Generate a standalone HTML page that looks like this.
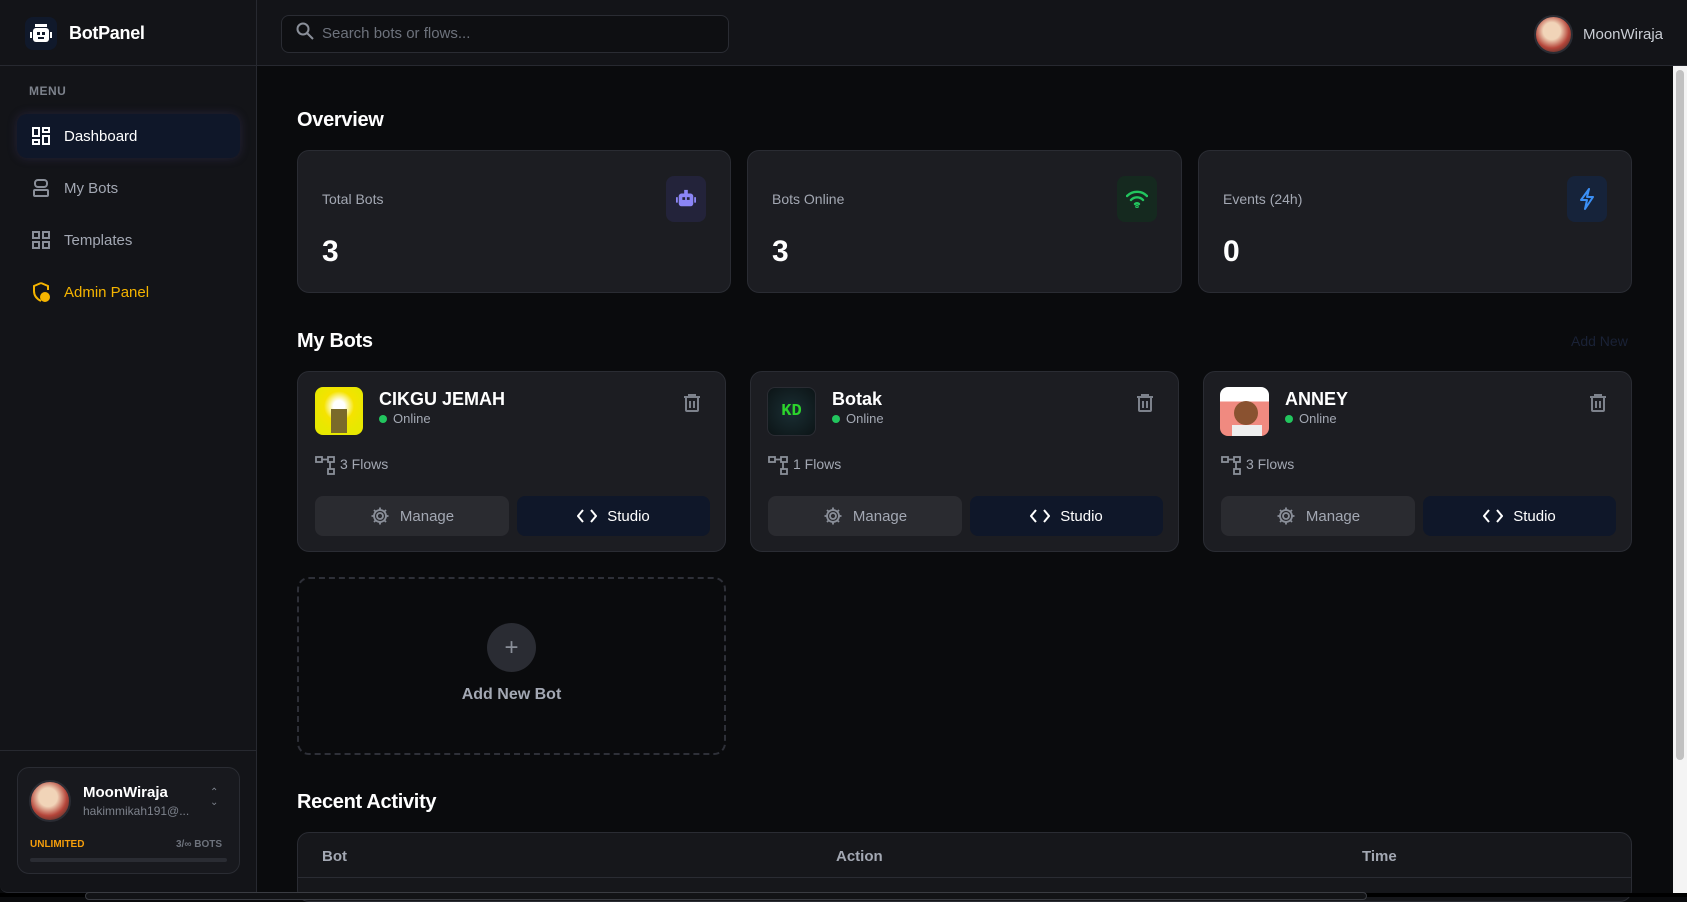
<!DOCTYPE html>
<html><head><meta charset="utf-8"><style>
*{box-sizing:border-box;margin:0;padding:0}
body{width:1687px;height:897px;overflow:hidden;background:#0a0b0d;font-family:"Liberation Sans",sans-serif;color:#fff;position:relative}
.a{position:absolute}
.side{left:0;top:0;width:257px;height:893px;background:#131418;border-right:1px solid #272930;border-bottom:1px solid #272930;border-radius:0 0 0 8px}
.top{left:257px;top:0;width:1430px;height:66px;background:#131418;border-bottom:1px solid #272930}
.card{background:#1c1d22;border:1px solid #2a2c33;border-radius:12px}
.lbl{font-size:14px;color:#a3a8b3}
.num{font-size:30px;font-weight:bold}
.ib{width:40px;height:46px;border-radius:8px;display:flex;align-items:center;justify-content:center}
.h2{font-size:20px;font-weight:bold;letter-spacing:-0.3px}
.nav{left:17px;width:223px;height:44px;display:flex;align-items:center;padding-left:15px;font-size:15px;color:#a3a8b3;border-radius:10px}
.nav svg{margin-right:14px}
.btn{height:40px;border-radius:8px;display:flex;align-items:center;justify-content:center;font-size:15px}
.btn svg{margin-right:10px}
</style></head><body>
<div class="a" style="left:0;top:0;width:1687px;height:2px;background:#3a3c42"></div>
<div class="a side"></div>
<div class="a" style="left:0;top:65px;width:257px;height:1px;background:#272930"></div>
<div class="a" style="left:25px;top:17px;width:32px;height:33px;background:#10192b;border-radius:8px;display:flex;align-items:center;justify-content:center">
<svg width="22" height="20" viewBox="0 0 22 20"><rect x="5" y="0" width="12" height="3" fill="#fff"/><rect x="3" y="4" width="16" height="14" rx="3" fill="#fff"/><rect x="0" y="8" width="2" height="6" fill="#fff"/><rect x="20" y="8" width="2" height="6" fill="#fff"/><rect x="7" y="8" width="3" height="3" fill="#10192b"/><rect x="12" y="8" width="3" height="3" fill="#10192b"/><rect x="8" y="13" width="6" height="2" fill="#10192b"/></svg></div>
<div class="a" style="left:69px;top:23px;font-size:18px;font-weight:bold;letter-spacing:-0.3px">BotPanel</div>
<div class="a" style="left:29px;top:84px;font-size:12px;font-weight:bold;color:#7d828c;letter-spacing:.5px">MENU</div>
<div class="a nav" style="top:114px;background:#0f1729;color:#fff;box-shadow:0 0 10px rgba(90,80,160,.25)"><svg width="18" height="18" viewBox="0 0 18 18" fill="none" stroke="#fff" stroke-width="2"><rect x="1" y="1" width="6" height="8"/><rect x="11" y="1" width="6" height="4"/><rect x="1" y="13" width="6" height="4"/><rect x="11" y="9" width="6" height="8"/></svg>Dashboard</div>
<div class="a nav" style="top:166px"><svg width="18" height="18" viewBox="0 0 18 18" fill="none" stroke="#8a8f99" stroke-width="2"><rect x="3" y="1" width="12" height="7" rx="3"/><rect x="2" y="11" width="14" height="6" rx="1"/></svg>My Bots</div>
<div class="a nav" style="top:218px"><svg width="18" height="18" viewBox="0 0 18 18" fill="none" stroke="#8a8f99" stroke-width="2"><rect x="1" y="1" width="6" height="6"/><rect x="11" y="1" width="6" height="6"/><rect x="1" y="11" width="6" height="6"/><rect x="11" y="11" width="6" height="6"/></svg>Templates</div>
<div class="a nav" style="top:270px;color:#f5b400"><svg width="18" height="20" viewBox="0 0 18 20" fill="none" stroke="#f5b400" stroke-width="2"><path d="M9 1L2 4v5c0 5 3 8 7 10"/><path d="M9 1l7 3v4"/><circle cx="13" cy="15" r="4" fill="#f5b400"/></svg>Admin Panel</div>
<div class="a" style="left:0;top:750px;width:257px;height:1px;background:#272930"></div>
<div class="a card" style="left:17px;top:767px;width:223px;height:107px;background:#18191e">
<div class="a" style="left:11px;top:12px;width:42px;height:42px;border-radius:50%;background:radial-gradient(circle at 45% 40%,#f1d4b8 30%,#b5453a 60%,#3a2a25 90%);border:2px solid #2a2c33"></div>
<div class="a" style="left:65px;top:16px;font-size:15px;font-weight:bold">MoonWiraja</div>
<div class="a" style="left:65px;top:36px;font-size:12px;color:#7d828c">hakimmikah191@...</div>
<div class="a" style="left:192px;top:20px;font-size:10px;color:#7d828c;line-height:10px">⌃<br>⌄</div>
<div class="a" style="left:12px;top:71px;font-size:10px;font-weight:bold;color:#f59e0b">UNLIMITED</div>
<div class="a" style="left:158px;top:71px;font-size:10px;font-weight:bold;color:#6d727c">3/∞ BOTS</div>
<div class="a" style="left:12px;top:90px;width:197px;height:4px;border-radius:2px;background:#2a2c33"></div>
</div>
<div class="a top"></div>
<div class="a" style="left:281px;top:15px;width:448px;height:38px;border:1px solid #2a2c33;border-radius:8px;background:#0e0f12"></div>
<svg class="a" style="left:296px;top:22px" width="18" height="18" viewBox="0 0 18 18" fill="none" stroke="#8a8f99" stroke-width="2"><circle cx="7" cy="7" r="5.5"/><path d="M11 11l6 6"/></svg>
<div class="a" style="left:322px;top:25px;font-size:15px;color:#6d727c">Search bots or flows...</div>
<div class="a" style="left:1534px;top:15px;width:39px;height:39px;border-radius:50%;background:radial-gradient(circle at 45% 40%,#f1d4b8 30%,#b5453a 60%,#3a2a25 90%);border:2px solid #2a2c33"></div>
<div class="a" style="left:1583px;top:26px;font-size:15px;color:#c9cdd4">MoonWiraja</div>
<div class="a" style="left:1673px;top:66px;width:14px;height:831px;background:#f4f4f4"></div>
<div class="a" style="left:1676px;top:70px;width:8px;height:690px;border-radius:4px;background:#c1c1c1"></div>
<div class="a h2" style="left:297px;top:109px">Overview</div>
<div class="a card" style="left:297px;top:150px;width:434px;height:143px"><div class="a lbl" style="left:24px;top:40px">Total Bots</div><div class="a num" style="left:24px;top:84px">3</div><div class="a ib" style="left:368px;top:25px;background:#23233a"><svg width="20" height="20" viewBox="0 0 22 20"><rect x="3" y="4" width="16" height="14" rx="3" fill="#8b85f5"/><rect x="9" y="0" width="4" height="4" fill="#8b85f5"/><rect x="0" y="8" width="2" height="6" fill="#8b85f5"/><rect x="20" y="8" width="2" height="6" fill="#8b85f5"/><rect x="7" y="8" width="3" height="3" fill="#23233a"/><rect x="12" y="8" width="3" height="3" fill="#23233a"/></svg></div></div>
<div class="a card" style="left:747px;top:150px;width:435px;height:143px"><div class="a lbl" style="left:24px;top:40px">Bots Online</div><div class="a num" style="left:24px;top:84px">3</div><div class="a ib" style="left:369px;top:25px;background:#15291f"><svg width="22" height="18" viewBox="0 0 22 18" fill="none" stroke="#22c55e" stroke-width="2.4" stroke-linecap="round"><path d="M1 6a14 14 0 0 1 20 0"/><path d="M5 10a8 8 0 0 1 12 0"/><path d="M9 14a3 3 0 0 1 4 0"/><circle cx="11" cy="16.5" r=".6"/></svg></div></div>
<div class="a card" style="left:1198px;top:150px;width:434px;height:143px"><div class="a lbl" style="left:24px;top:40px">Events (24h)</div><div class="a num" style="left:24px;top:84px">0</div><div class="a ib" style="left:368px;top:25px;background:#16233a"><svg width="16" height="22" viewBox="0 0 16 22" fill="none" stroke="#3b8ff5" stroke-width="2" stroke-linejoin="round"><path d="M10 1L2 12h6l-2 9 8-12H8z"/></svg></div></div>
<div class="a h2" style="left:297px;top:330px">My Bots</div>
<div class="a" style="left:1571px;top:333px;font-size:14px;color:#1a2236">Add New</div>

<div class="a card" style="left:297px;top:371px;width:429px;height:181px">
<div class="a" style="left:17px;top:15px;width:48px;height:48px;border-radius:8px;background:radial-gradient(circle at 50% 40%,#fff 15%,#f5e300 40%,#e8e800 70%)"><div class="a" style="left:16px;top:22px;width:16px;height:24px;background:#7a6a2a"></div></div>
<div class="a" style="left:81px;top:17px;font-size:18px;font-weight:bold">CIKGU JEMAH</div>
<div class="a" style="left:81px;top:43px;width:8px;height:8px;border-radius:50%;background:#22c55e"></div>
<div class="a" style="left:95px;top:39px;font-size:13px;color:#a3a8b3">Online</div>
<svg class="a" style="left:386px;top:22px" width="16" height="18" viewBox="0 0 16 18" fill="none" stroke="#7d828c" stroke-width="2"><path d="M0 3h16M5 3V1h6v2"/><rect x="2" y="3" width="12" height="14" rx="1"/><path d="M6 7v7M10 7v7"/></svg>
<svg class="a" style="left:17px;top:84px" width="20" height="20" viewBox="0 0 20 20" fill="none" stroke="#8a8f99" stroke-width="1.8"><rect x="1" y="1" width="6" height="5"/><rect x="13" y="1" width="6" height="5"/><rect x="13" y="13" width="6" height="5"/><path d="M7 3.5h6M15 6v7"/></svg>
<div class="a" style="left:42px;top:84px;font-size:14px;color:#a3a8b3">3 Flows</div>
<div class="a btn" style="left:17px;top:124px;width:194px;background:#2a2b30;color:#a3a8b3"><svg width="20" height="20" viewBox="0 0 20 20" fill="none" stroke="#8a8f99" stroke-width="1.8"><circle cx="10" cy="10" r="3"/><path d="M10 1.5v3M10 15.5v3M1.5 10h3M15.5 10h3M4 4l2 2M14 14l2 2M4 16l2-2M14 6l2-2"/><circle cx="10" cy="10" r="6"/></svg>Manage</div>
<div class="a btn" style="left:219px;top:124px;width:193px;background:#0f1729;color:#fff"><svg width="20" height="14" viewBox="0 0 20 14" fill="none" stroke="#fff" stroke-width="2"><path d="M6 1L1 7l5 6M14 1l5 6-5 6"/></svg>Studio</div>
</div>

<div class="a card" style="left:750px;top:371px;width:429px;height:181px">
<div class="a" style="left:16px;top:15px;width:49px;height:49px;border-radius:8px;background:radial-gradient(#1a2e33,#0c1416);border:1px solid #2a2c33;color:#2cd42c;font-weight:bold;font-size:17px;display:flex;align-items:center;justify-content:center;font-family:'Liberation Mono',monospace">KD</div>
<div class="a" style="left:81px;top:17px;font-size:18px;font-weight:bold">Botak</div>
<div class="a" style="left:81px;top:43px;width:8px;height:8px;border-radius:50%;background:#22c55e"></div>
<div class="a" style="left:95px;top:39px;font-size:13px;color:#a3a8b3">Online</div>
<svg class="a" style="left:386px;top:22px" width="16" height="18" viewBox="0 0 16 18" fill="none" stroke="#7d828c" stroke-width="2"><path d="M0 3h16M5 3V1h6v2"/><rect x="2" y="3" width="12" height="14" rx="1"/><path d="M6 7v7M10 7v7"/></svg>
<svg class="a" style="left:17px;top:84px" width="20" height="20" viewBox="0 0 20 20" fill="none" stroke="#8a8f99" stroke-width="1.8"><rect x="1" y="1" width="6" height="5"/><rect x="13" y="1" width="6" height="5"/><rect x="13" y="13" width="6" height="5"/><path d="M7 3.5h6M15 6v7"/></svg>
<div class="a" style="left:42px;top:84px;font-size:14px;color:#a3a8b3">1 Flows</div>
<div class="a btn" style="left:17px;top:124px;width:194px;background:#2a2b30;color:#a3a8b3"><svg width="20" height="20" viewBox="0 0 20 20" fill="none" stroke="#8a8f99" stroke-width="1.8"><circle cx="10" cy="10" r="3"/><path d="M10 1.5v3M10 15.5v3M1.5 10h3M15.5 10h3M4 4l2 2M14 14l2 2M4 16l2-2M14 6l2-2"/><circle cx="10" cy="10" r="6"/></svg>Manage</div>
<div class="a btn" style="left:219px;top:124px;width:193px;background:#0f1729;color:#fff"><svg width="20" height="14" viewBox="0 0 20 14" fill="none" stroke="#fff" stroke-width="2"><path d="M6 1L1 7l5 6M14 1l5 6-5 6"/></svg>Studio</div>
</div>

<div class="a card" style="left:1203px;top:371px;width:429px;height:181px">
<div class="a" style="left:16px;top:15px;width:49px;height:49px;border-radius:8px;background:linear-gradient(#fff 0 30%,#f08a80 30%);overflow:hidden"><div class="a" style="left:14px;top:14px;width:24px;height:24px;border-radius:50%;background:#8a5230"></div><div class="a" style="left:12px;top:38px;width:30px;height:12px;background:#eee"></div></div>
<div class="a" style="left:81px;top:17px;font-size:18px;font-weight:bold">ANNEY</div>
<div class="a" style="left:81px;top:43px;width:8px;height:8px;border-radius:50%;background:#22c55e"></div>
<div class="a" style="left:95px;top:39px;font-size:13px;color:#a3a8b3">Online</div>
<svg class="a" style="left:386px;top:22px" width="16" height="18" viewBox="0 0 16 18" fill="none" stroke="#7d828c" stroke-width="2"><path d="M0 3h16M5 3V1h6v2"/><rect x="2" y="3" width="12" height="14" rx="1"/><path d="M6 7v7M10 7v7"/></svg>
<svg class="a" style="left:17px;top:84px" width="20" height="20" viewBox="0 0 20 20" fill="none" stroke="#8a8f99" stroke-width="1.8"><rect x="1" y="1" width="6" height="5"/><rect x="13" y="1" width="6" height="5"/><rect x="13" y="13" width="6" height="5"/><path d="M7 3.5h6M15 6v7"/></svg>
<div class="a" style="left:42px;top:84px;font-size:14px;color:#a3a8b3">3 Flows</div>
<div class="a btn" style="left:17px;top:124px;width:194px;background:#2a2b30;color:#a3a8b3"><svg width="20" height="20" viewBox="0 0 20 20" fill="none" stroke="#8a8f99" stroke-width="1.8"><circle cx="10" cy="10" r="3"/><path d="M10 1.5v3M10 15.5v3M1.5 10h3M15.5 10h3M4 4l2 2M14 14l2 2M4 16l2-2M14 6l2-2"/><circle cx="10" cy="10" r="6"/></svg>Manage</div>
<div class="a btn" style="left:219px;top:124px;width:193px;background:#0f1729;color:#fff"><svg width="20" height="14" viewBox="0 0 20 14" fill="none" stroke="#fff" stroke-width="2"><path d="M6 1L1 7l5 6M14 1l5 6-5 6"/></svg>Studio</div>
</div>

<div class="a" style="left:297px;top:577px;width:429px;height:178px;border:2px dashed #2e3038;border-radius:12px"></div>
<div class="a" style="left:487px;top:623px;width:49px;height:49px;border-radius:50%;background:#2a2c33;color:#8a8f99;font-size:24px;display:flex;align-items:center;justify-content:center">+</div>
<div class="a" style="left:297px;top:686px;width:429px;text-align:center;font-size:16px;font-weight:bold;color:#a3a8b3">Add New Bot</div>
<div class="a h2" style="left:297px;top:791px">Recent Activity</div>
<div class="a" style="left:297px;top:832px;width:1335px;height:70px;background:#16171b;border:1px solid #2a2c33;border-radius:12px"></div>
<div class="a" style="left:298px;top:877px;width:1333px;height:1px;background:#2a2c33"></div>
<div class="a" style="left:322px;top:848px;font-size:15px;font-weight:bold;color:#a3a8b3">Bot</div>
<div class="a" style="left:836px;top:848px;font-size:15px;font-weight:bold;color:#a3a8b3">Action</div>
<div class="a" style="left:1362px;top:848px;font-size:15px;font-weight:bold;color:#a3a8b3">Time</div>
<div class="a" style="left:0;top:893px;width:1687px;height:4px;background:#000"></div>
<div class="a" style="left:85px;top:892px;width:1282px;height:8px;border-radius:8px;background:#121316;border:1px solid #3a3c42"></div>
</body></html>
